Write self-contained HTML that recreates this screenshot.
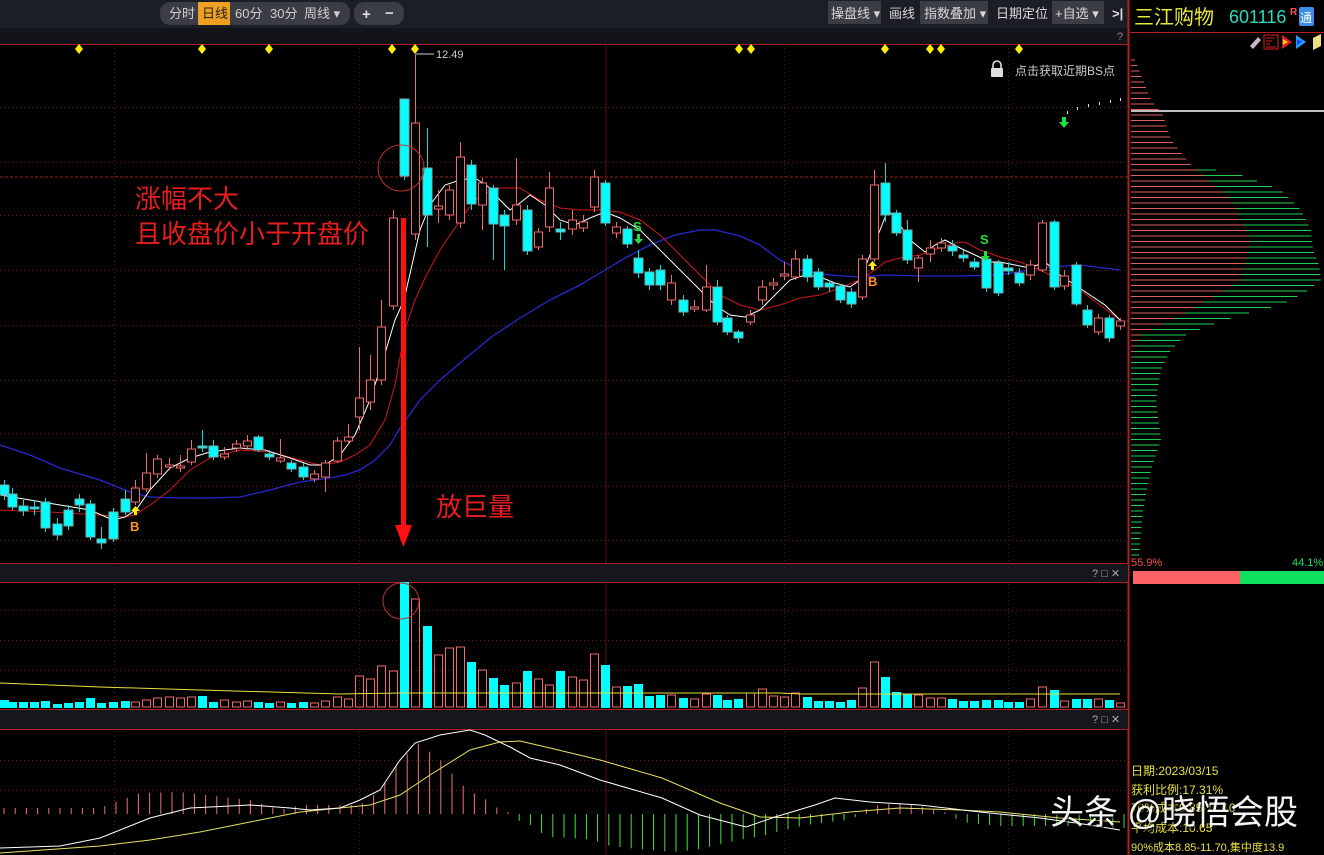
<!DOCTYPE html>
<html><head><meta charset="utf-8">
<style>
html,body{margin:0;padding:0;background:#000;}
body{width:1324px;height:855px;overflow:hidden;position:relative;font-family:"Liberation Sans","Noto Sans CJK SC",sans-serif;}
svg{position:absolute;left:0;top:0;}
</style></head>
<body>
<svg id="s" width="1324" height="855" xmlns="http://www.w3.org/2000/svg" font-family="Liberation Sans, Noto Sans CJK SC, sans-serif">
<rect width="1324" height="855" fill="#000"/>
<rect x="0" y="0" width="1128" height="28" fill="#1b1e25"/>
<rect x="0" y="28" width="1128" height="16" fill="#121419"/>
<rect x="160" y="2" width="190" height="23" rx="10" fill="#3a3d43"/>
<rect x="198" y="2" width="32" height="23" fill="#f0a020"/>
<g font-size="13" fill="#d0d0d0">
<text x="169" y="18">分时</text><text x="202" y="18" fill="#222">日线</text>
<text x="235" y="18">60分</text><text x="270" y="18">30分</text><text x="304" y="18">周线 ▾</text>
</g>
<rect x="354" y="2" width="50" height="23" rx="10" fill="#3a3d43"/>
<text x="362" y="19" font-size="15" fill="#ddd" font-weight="bold">+</text><text x="385" y="18" font-size="15" fill="#ddd" font-weight="bold">−</text>
<rect x="828" y="1" width="53" height="23" fill="#3a3d43"/>
<rect x="920" y="1" width="68" height="23" fill="#3a3d43"/>
<rect x="1052" y="1" width="52" height="23" fill="#3a3d43"/>
<g font-size="13" fill="#d8d8d8">
<text x="831" y="18">操盘线 ▾</text><text x="889" y="18">画线</text><text x="924" y="18">指数叠加 ▾</text>
<text x="996" y="18">日期定位</text><text x="1055" y="18">+自选 ▾</text>
<text x="1112" y="18" font-weight="bold" fill="#ddd">&gt;|</text>
<text x="1117" y="40" font-size="11" fill="#888">?</text>
</g>
<line x1="0" y1="44.5" x2="1128" y2="44.5" stroke="#b02020"/>
<line x1="1128.5" y1="0" x2="1128.5" y2="855" stroke="#b02020" stroke-width="2"/>
<g id="grid" stroke="#6a1818" stroke-dasharray="1,3"></g>
<line x1="0" y1="177" x2="1128" y2="177" stroke="#a02020" stroke-dasharray="3,2"/>
<line x1="606" y1="44" x2="606" y2="855" stroke="#5a1515"/>
<g id="ma"></g>
<g id="cd"></g>
<g id="dia" fill="#ffee00"></g>
<text x="436" y="58" font-size="11" fill="#ccc">12.49</text>
<line x1="416" y1="54" x2="434" y2="54" stroke="#ccc"/>
<rect x="991" y="68" width="12" height="9" rx="1" fill="#ddd"/>
<path d="M993,68 v-3 a4,4 0 0 1 8,0 v3" fill="none" stroke="#ddd" stroke-width="1.6"/>
<text x="1015" y="75" font-size="12" fill="#ccc">点击获取近期BS点</text>
<g fill="#ddd"><rect x="1067" y="111" width="1" height="3"/><rect x="1077" y="107" width="1" height="3"/><rect x="1088" y="104" width="1" height="3"/><rect x="1099" y="102" width="1" height="3"/><rect x="1110" y="100" width="1" height="3"/><rect x="1120" y="98" width="1" height="3"/></g>
<path d="M1062,117 h4 v5 h3 l-5,6 l-5,-6 h3z" fill="#20e040"/>
<path d="M637,234 h3 v5 h3 l-4.5,5 l-4.5,-5 h3z" fill="#20e040"/>
<text x="633" y="231" font-size="13" font-weight="bold" fill="#20e040">S</text>
<path d="M984,251 h3 v5 h3 l-4.5,5 l-4.5,-5 h3z" fill="#20e040"/>
<text x="980" y="244" font-size="13" font-weight="bold" fill="#20e040">S</text>
<path d="M134,515 h3 v-4 h3 l-4.5,-5 l-4.5,5 h3z" fill="#ffee00"/>
<text x="130" y="531" font-size="13" font-weight="bold" fill="#ff9020">B</text>
<path d="M871,270 h3 v-4 h3 l-4.5,-5 l-4.5,5 h3z" fill="#ffee00"/>
<text x="868" y="286" font-size="13" font-weight="bold" fill="#ff9020">B</text>
<circle cx="401" cy="168" r="23" fill="none" stroke="#c03030"/>
<text x="135" y="208" font-size="26" fill="#e81e1e">涨幅不大</text>
<text x="135" y="243" font-size="26" fill="#e81e1e">且收盘价小于开盘价</text>
<rect x="401" y="218" width="5" height="310" fill="#ff1010"/>
<path d="M395,525 h17 l-8.5,22z" fill="#ff1010"/>
<text x="436" y="516" font-size="26" fill="#e81e1e">放巨量</text>
<rect x="0" y="563" width="1128" height="19" fill="#15171c"/>
<line x1="0" y1="563.5" x2="1128" y2="563.5" stroke="#b02020"/>
<line x1="0" y1="582.5" x2="1128" y2="582.5" stroke="#b02020"/>
<rect x="0" y="709" width="1128" height="20" fill="#15171c"/>
<line x1="0" y1="709.5" x2="1128" y2="709.5" stroke="#b02020"/>
<line x1="0" y1="729.5" x2="1128" y2="729.5" stroke="#b02020"/>
<g font-size="11" fill="#aaa"><text x="1092" y="577">? □ ✕</text><text x="1092" y="723">? □ ✕</text></g>
<g id="vol"></g>
<circle cx="401" cy="601" r="18" fill="none" stroke="#c03030"/>
<g id="macd"></g>
<text x="1134" y="24" font-size="20" fill="#e8e838">三江购物</text>
<text x="1229" y="23" font-size="18" fill="#30d8c0">601116</text>
<text x="1290" y="15" font-size="10" fill="#ff5050" font-weight="bold">R</text>
<rect x="1299" y="7" width="15" height="19" rx="2" fill="#3a8ee8"/>
<text x="1300" y="22" font-size="12" fill="#fff">通</text>
<line x1="1130" y1="32.5" x2="1324" y2="32.5" stroke="#b02020"/>
<path d="M1250,46 l8,-9 l3,3 l-8,9z" fill="#c8b8c8"/>
<rect x="1264" y="35" width="14" height="14" fill="none" stroke="#e02020"/>
<g stroke="#e02020"><line x1="1266" y1="38" x2="1274" y2="38"/><line x1="1266" y1="41" x2="1272" y2="41"/><line x1="1266" y1="44" x2="1270" y2="44"/><line x1="1266" y1="47" x2="1276" y2="47"/></g>
<path d="M1282,35 l10,7 l-10,7z" fill="#e02020"/><path d="M1283,39 l5,3 l-5,3z" fill="#ffd000"/>
<path d="M1296,35 l10,7 l-10,7z" fill="#20a0ff"/><path d="M1297,39 l5,3 l-5,3z" fill="#2040ff"/>
<path d="M1313,38 l8,-4 v12 l-8,4z" fill="#f0e080"/>
<line x1="1131" y1="111" x2="1324" y2="111" stroke="#fff" stroke-width="1.5"/>
<g id="chip"></g>
<text x="1131" y="566" font-size="11" fill="#ff5050">55.9%</text>
<text x="1292" y="566" font-size="11" fill="#20e060">44.1%</text>
<rect x="1133" y="571" width="107" height="13" fill="#ff6262"/>
<rect x="1240" y="571" width="84" height="13" fill="#10e060"/>
<g font-size="12" fill="#e8e040">
<text x="1131" y="775">日期:2023/03/15</text>
<text x="1131" y="794">获利比例:17.31%</text>
<text x="1131" y="812">70%成本9.85-11.10</text>
<text x="1131" y="832">平均成本:10.65</text>
<text x="1131" y="851" font-size="11">90%成本8.85-11.70,集中度13.9</text>
</g>
<text x="1052" y="826" font-size="34" fill="#000" opacity="0.6">头条 @晓悟会股</text>
<text x="1050" y="824" font-size="34" fill="#f4f4f4">头条 @晓悟会股</text>
</svg>
<script>
const NS="http://www.w3.org/2000/svg";
function el(p,t,a){const e=document.createElementNS(NS,t);for(const k in a)e.setAttribute(k,a[k]);document.getElementById(p).appendChild(e);return e;}
[107,162,215,270,325,380,433,486,540,610,640,670,760,790].forEach(y=>el('grid','line',{x1:0,y1:y+.5,x2:1128,y2:y+.5}));
[114,359,784,1008].forEach(x=>el('grid','line',{x1:x+.5,y1:44,x2:x+.5,y2:855}));
[79,202,269,392,415,739,751,885,930,941,1019].forEach(x=>el('dia','path',{d:`M${x},44 l4,5 l-4,5 l-4,-5z`}));
function pl(id,pts,c,w){el(id,'polyline',{points:pts.map(p=>p.join(',')).join(' '),fill:'none',stroke:c,'stroke-width':w||1});}
pl('ma',[[0,445],[30,455],[60,468],[100,480],[130,492],[150,497],[180,498],[210,498],[240,497],[270,490],[300,482],[330,478],[345,475],[360,470],[375,460],[390,445],[400,428],[420,400],[440,380],[460,363],[490,338],[520,318],[550,300],[580,285],[600,273],[625,258],[650,245],[675,235],[700,230],[715,230],[740,236],[760,245],[780,260],[800,270],[830,275],[860,277],[885,275],[920,276],[960,276],[1000,275],[1040,268],[1080,265],[1120,270]],'#2828d0',1.3);
pl('ma',[[0,510],[50,512],[100,515],[125,517],[135,515],[150,505],[170,490],[190,470],[210,458],[240,450],[270,452],[300,460],[320,465],[340,462],[355,455],[370,445],[385,420],[395,385],[405,330],[415,300],[425,278],[440,250],[455,228],[465,213],[480,195],[500,188],[520,188],[540,200],[560,208],[580,210],[600,210],[620,212],[640,220],[660,235],[680,255],[700,275],[720,295],[740,305],[760,310],[780,305],[800,298],[820,295],[840,288],[860,280],[875,270],[885,262],[900,258],[920,255],[940,248],[955,243],[965,242],[980,250],[1000,257],[1020,262],[1040,270],[1060,280],[1080,290],[1100,305],[1120,320]],'#d01818',1);
pl('ma',[[0,495],[30,500],[60,505],[90,510],[113,520],[125,517],[136,510],[150,490],[170,468],[190,458],[210,452],[240,448],[265,450],[290,458],[310,465],[325,465],[340,455],[355,435],[370,400],[383,360],[395,320],[404,300],[412,265],[420,230],[430,205],[445,185],[460,180],[475,178],[490,188],[500,200],[510,210],[520,203],[530,195],[545,205],[560,220],[575,225],[590,218],[605,212],[620,218],[640,230],[650,240],[665,255],[680,270],[700,290],[715,305],[730,315],[745,317],[760,310],[775,295],[790,280],[805,275],[820,277],[835,283],[850,287],[860,280],[870,255],[880,230],[888,210],[900,225],[910,240],[925,252],[935,245],[945,240],[960,248],[975,255],[990,262],[1000,262],[1015,265],[1030,268],[1045,262],[1060,275],[1075,285],[1090,295],[1105,305],[1120,320]],'#fff',1);
const D=`c 4 485 495 480 500 700
c 12 494 507 488 510 702
c 23 506 511 500 516 702
c 34 507 509 500 515 702
c 45 502 528 498 532 701
c 57 524 535 518 540 704
c 68 510 526 505 530 703
c 79 499 505 494 512 702
c 90 504 537 500 540 698
c 101 539 543 527 549 703
c 113 512 539 508 542 702
c 125 499 512 490 515 701
r 135 488 502 480 505 702
r 146 473 489 453 492 700
r 157 459 474 455 478 698
r 169 465 467 458 470 697
r 180 466 468 455 472 698
r 191 449 462 440 465 697
c 202 446 448 430 452 696
c 213 446 457 440 460 702
r 224 454 457 447 460 700
r 236 444 448 440 452 702
r 247 441 446 435 450 701
c 258 437 450 435 452 702
c 269 454 457 450 460 703
r 280 458 461 439 463 702
c 291 463 469 460 472 703
c 303 467 477 463 480 702
r 314 474 479 470 482 703
r 325 463 477 460 492 701
r 337 441 461 437 463 697
r 348 437 441 424 445 699
r 359 398 417 347 430 676
r 370 380 402 355 410 679
r 381 327 380 300 385 666
r 393 218 306 210 310 671
c 404 99 176 99 180 582
r 415 123 234 54 240 599
c 427 168 215 128 247 626
r 438 206 209 190 223 655
r 449 190 215 185 220 648
r 460 157 223 142 228 647
c 471 165 204 160 210 662
r 482 183 205 178 230 670
c 493 188 224 185 260 678
c 504 215 226 210 270 685
r 516 205 220 158 225 683
c 527 210 251 205 255 671
r 538 232 247 228 250 679
r 549 188 227 172 232 685
c 560 229 232 222 240 671
r 572 220 229 210 235 677
r 583 222 228 215 232 680
r 594 177 207 170 212 654
c 605 183 223 180 226 665
r 616 227 233 222 238 687
c 627 229 244 226 248 686
c 638 258 273 250 278 684
c 649 272 285 268 290 696
c 660 270 285 265 290 695
r 671 283 300 275 305 695
c 683 300 312 295 316 698
r 694 307 309 300 312 699
r 706 287 310 265 312 694
c 717 287 322 280 325 695
c 727 318 332 315 335 700
c 738 332 338 330 343 699
r 750 315 322 310 325 693
r 762 287 300 280 305 689
r 773 283 285 278 290 696
r 784 274 276 262 280 697
r 795 259 277 250 280 693
c 807 259 277 255 282 697
c 818 272 287 268 290 701
c 829 283 287 280 292 701
c 840 286 300 284 303 702
c 851 292 304 288 308 700
r 862 259 297 255 300 688
r 874 185 259 170 262 662
c 885 183 215 163 222 677
c 896 213 233 210 236 692
c 907 230 260 220 264 694
r 918 258 268 255 282 695
r 930 248 254 240 262 698
r 941 243 248 238 252 698
c 952 246 251 240 256 699
c 963 255 258 250 262 701
c 974 262 267 258 270 701
c 986 259 288 255 292 700
c 998 263 293 260 296 700
c 1008 268 271 262 275 702
c 1019 273 283 268 286 702
r 1030 265 275 260 280 699
r 1042 223 270 220 272 687
c 1054 222 287 220 290 690
r 1064 276 286 270 290 701
c 1076 265 304 262 306 699
c 1087 310 325 305 328 699
r 1098 318 332 314 335 699
c 1109 318 338 315 342 700
r 1120 321 326 318 330 703`;
D.split('\n').forEach(l=>{const [t,...n]=l.trim().split(/\s+/);const [x,a,b,h,lo,v]=n.map(Number);
 const red=t==='r';const col=red?'#f06a6a':'#00ffff';
 el('cd','line',{x1:x+.5,y1:h,x2:x+.5,y2:lo,stroke:red?'#f06a6a':'#00e0e0'});
 const bh=Math.max(b-a,2);
 el('cd','rect',red?{x:x-3.5,y:a,width:8,height:bh,fill:'#000',stroke:col}:{x:x-4,y:a,width:9,height:bh,fill:col,stroke:'#7aa'});
 el('vol','rect',red?{x:x-3.5,y:v,width:8,height:707-v,fill:'none',stroke:col}:{x:x-4,y:v,width:9,height:708-v,fill:col});
});
pl('vol',[[0,683],[100,687],[200,690],[340,694],[400,693],[700,693],[780,693],[800,694],[1120,694]],'#e8e040',1);
for(let x=4;x<1125;x+=11.2){let t;
 const pts=[[0,808],[100,808],[140,793],[180,792],[250,800],[280,810],[300,805],[345,805],[360,805],[370,798],[381,789],[393,769],[404,759],[415,741],[427,750],[438,757],[449,770],[460,783],[471,792],[483,797],[493,806],[505,811],[512,814],[516,820],[528,823],[538,831],[549,837],[571,838],[594,840],[605,845],[628,848],[650,850],[673,852],[695,850],[717,845],[739,840],[762,836],[784,830],[806,825],[829,822],[851,820],[860,814],[870,806],[900,803],[930,808],[950,814],[960,822],[1000,826],[1060,826],[1125,828]];
 for(let i=0;i<pts.length-1;i++){if(x>=pts[i][0]&&x<=pts[i+1][0]){const f=(x-pts[i][0])/(pts[i+1][0]-pts[i][0]);t=pts[i][1]+f*(pts[i+1][1]-pts[i][1]);break;}}
 if(t===undefined)continue;
 el('macd','line',{x1:x,y1:814,x2:x,y2:t,stroke:t<814?'#f07070':'#40e040'});
}
pl('macd',[[0,853],[100,846],[150,840],[200,832],[250,822],[300,812],[340,808],[370,805],[400,795],[430,775],[470,750],[500,742],[520,741],[550,748],[600,760],[662,778],[720,803],[760,817],[800,818],[850,812],[900,808],[960,810],[1000,812],[1060,818],[1120,822]],'#e8e060',1);
pl('macd',[[0,848],[60,846],[80,842],[100,838],[150,818],[190,808],[250,805],[290,808],[310,810],[340,808],[360,800],[380,790],[400,760],[415,743],[440,735],[470,730],[485,735],[510,747],[530,758],[560,765],[600,780],[662,798],[700,815],[746,827],[775,817],[815,805],[835,798],[870,802],[920,805],[980,812],[1040,818],[1090,825],[1120,830]],'#fff',1);
function L(y){const p=[[60,4],[100,20],[115,32],[140,40],[165,60],[175,110],[190,150],[210,170],[230,180],[250,182],[265,188],[280,190],[292,175],[305,150],[315,110],[325,80],[335,55],[350,40],[370,30],[400,25],[440,30],[470,20],[510,12],[555,8]];
 for(let i=0;i<p.length-1;i++)if(y>=p[i][0]&&y<=p[i+1][0]){const f=(y-p[i][0])/(p[i+1][0]-p[i][0]);return p[i][1]+f*(p[i+1][1]-p[i][1]);}return 0;}
function R(y){if(y<165)return 999;const p=[[165,60],[200,100],[240,120],[280,110],[310,60],[335,10],[360,0]];
 for(let i=0;i<p.length-1;i++)if(y>=p[i][0]&&y<=p[i+1][0]){const f=(y-p[i][0])/(p[i+1][0]-p[i][0]);return p[i][1]+f*(p[i+1][1]-p[i][1]);}return 0;}
for(let y=60;y<556;y+=5.5){const l=L(y),r=Math.min(l,R(y));
 if(r>0)el('chip','line',{x1:1131,y1:y,x2:1131+r,y2:y,stroke:'#e06060'});
 if(l>r)el('chip','line',{x1:1131+r,y1:y,x2:1131+l,y2:y,stroke:'#20d050'});}
</script>
</body></html>
